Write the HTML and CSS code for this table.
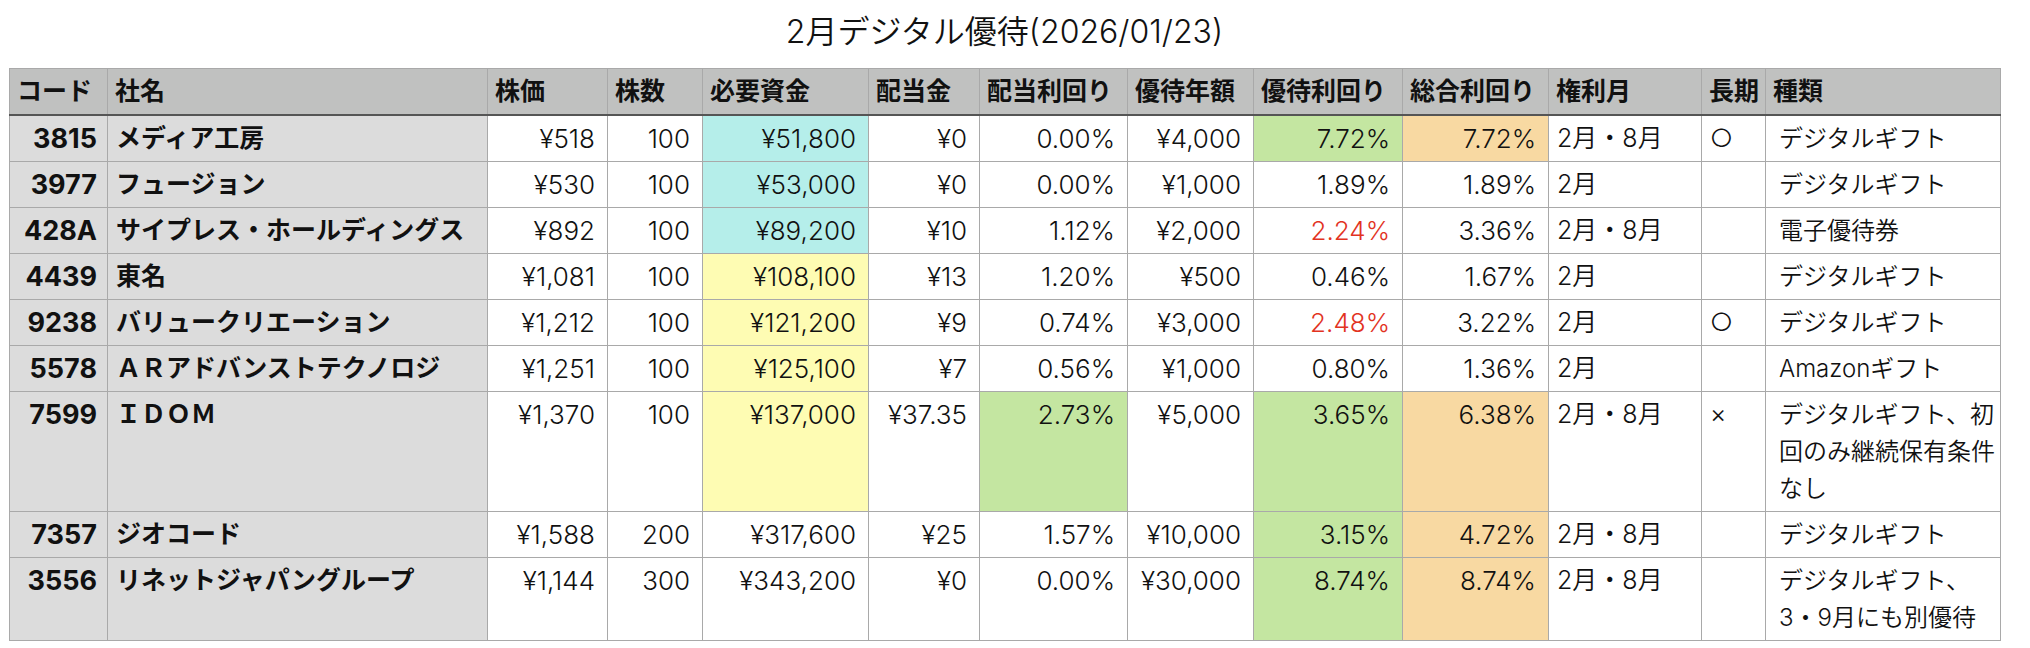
FILE: index.html
```html
<!DOCTYPE html>
<html lang="ja">
<head>
<meta charset="utf-8">
<title>2月デジタル優待</title>
<link rel="stylesheet" href="styles.css">
</head>
<body>
<div class="page">
  <h1 class="title">2月デジタル優待(2026/01/23)</h1>
  <table class="sheet">
    <colgroup>
      <col class="w-code"><col class="w-name"><col class="w-price"><col class="w-qty"><col class="w-need">
      <col class="w-div"><col class="w-dy"><col class="w-ya"><col class="w-yy"><col class="w-ty">
      <col class="w-month"><col class="w-long"><col class="w-kind">
    </colgroup>
    <thead>
      <tr>
        <th>コード</th><th>社名</th><th>株価</th><th>株数</th><th>必要資金</th>
        <th>配当金</th><th>配当利回り</th><th>優待年額</th><th>優待利回り</th><th>総合利回り</th>
        <th>権利月</th><th>長期</th><th>種類</th>
      </tr>
    </thead>
    <tbody>
      <tr>
        <td class="code">3815</td><td class="name">メディア工房</td>
        <td class="num">¥518</td><td class="num">100</td><td class="num cyan">¥51,800</td>
        <td class="num">¥0</td><td class="num">0.00%</td><td class="num">¥4,000</td>
        <td class="num green">7.72%</td><td class="num orange">7.72%</td>
        <td>2月・8月</td><td>○</td><td class="kind">デジタルギフト</td>
      </tr>
      <tr>
        <td class="code">3977</td><td class="name">フュージョン</td>
        <td class="num">¥530</td><td class="num">100</td><td class="num cyan">¥53,000</td>
        <td class="num">¥0</td><td class="num">0.00%</td><td class="num">¥1,000</td>
        <td class="num">1.89%</td><td class="num">1.89%</td>
        <td>2月</td><td></td><td class="kind">デジタルギフト</td>
      </tr>
      <tr>
        <td class="code">428A</td><td class="name">サイプレス・ホールディングス</td>
        <td class="num">¥892</td><td class="num">100</td><td class="num cyan">¥89,200</td>
        <td class="num">¥10</td><td class="num">1.12%</td><td class="num">¥2,000</td>
        <td class="num red">2.24%</td><td class="num">3.36%</td>
        <td>2月・8月</td><td></td><td class="kind">電子優待券</td>
      </tr>
      <tr>
        <td class="code">4439</td><td class="name">東名</td>
        <td class="num">¥1,081</td><td class="num">100</td><td class="num yellow">¥108,100</td>
        <td class="num">¥13</td><td class="num">1.20%</td><td class="num">¥500</td>
        <td class="num">0.46%</td><td class="num">1.67%</td>
        <td>2月</td><td></td><td class="kind">デジタルギフト</td>
      </tr>
      <tr>
        <td class="code">9238</td><td class="name">バリュークリエーション</td>
        <td class="num">¥1,212</td><td class="num">100</td><td class="num yellow">¥121,200</td>
        <td class="num">¥9</td><td class="num">0.74%</td><td class="num">¥3,000</td>
        <td class="num red">2.48%</td><td class="num">3.22%</td>
        <td>2月</td><td>○</td><td class="kind">デジタルギフト</td>
      </tr>
      <tr>
        <td class="code">5578</td><td class="name">ＡＲアドバンストテクノロジ</td>
        <td class="num">¥1,251</td><td class="num">100</td><td class="num yellow">¥125,100</td>
        <td class="num">¥7</td><td class="num">0.56%</td><td class="num">¥1,000</td>
        <td class="num">0.80%</td><td class="num">1.36%</td>
        <td>2月</td><td></td><td class="kind">Amazonギフト</td>
      </tr>
      <tr>
        <td class="code">7599</td><td class="name">ＩＤＯＭ</td>
        <td class="num">¥1,370</td><td class="num">100</td><td class="num yellow">¥137,000</td>
        <td class="num">¥37.35</td><td class="num green">2.73%</td><td class="num">¥5,000</td>
        <td class="num green">3.65%</td><td class="num orange">6.38%</td>
        <td>2月・8月</td><td>×</td><td class="kind">デジタルギフト、初<br>回のみ継続保有条件<br>なし</td>
      </tr>
      <tr>
        <td class="code">7357</td><td class="name">ジオコード</td>
        <td class="num">¥1,588</td><td class="num">200</td><td class="num">¥317,600</td>
        <td class="num">¥25</td><td class="num">1.57%</td><td class="num">¥10,000</td>
        <td class="num green">3.15%</td><td class="num orange">4.72%</td>
        <td>2月・8月</td><td></td><td class="kind">デジタルギフト</td>
      </tr>
      <tr>
        <td class="code">3556</td><td class="name">リネットジャパングループ</td>
        <td class="num">¥1,144</td><td class="num">300</td><td class="num">¥343,200</td>
        <td class="num">¥0</td><td class="num">0.00%</td><td class="num">¥30,000</td>
        <td class="num green">8.74%</td><td class="num orange">8.74%</td>
        <td>2月・8月</td><td></td><td class="kind">デジタルギフト、<br>3・9月にも別優待</td>
      </tr>
    </tbody>
  </table>
</div>
</body>
</html>
```
FILE: styles.css
```css
body {
  margin: 0;
  background: #ffffff;
  color: #111111;
  font-family: "Inter", "Noto Sans CJK JP", sans-serif;
}

.page {
  padding: 0 0 0 9px;
}

.title {
  margin: 0;
  width: 1991px;
  padding-top: 12px;
  height: 56px;
  line-height: 40px;
  font-size: 32px;
  font-weight: 350;
  text-align: center;
}

.sheet {
  border-collapse: collapse;
  table-layout: fixed;
  width: 1991px;
}

.w-code { width: 98px; }
.w-name { width: 380px; }
.w-price { width: 120px; }
.w-qty { width: 95px; }
.w-need { width: 166px; }
.w-div { width: 111px; }
.w-dy { width: 148px; }
.w-ya { width: 126px; }
.w-yy { width: 149px; }
.w-ty { width: 146px; }
.w-month { width: 153px; }
.w-long { width: 64px; }
.w-kind { width: 235px; }

.sheet th,
.sheet td {
  border: 1px solid #a9a9a9;
  padding: 4px 8px 4px 8px;
  font-size: 25px;
  font-weight: 350;
  line-height: 37px;
  vertical-align: top;
  white-space: nowrap;
  overflow: hidden;
}

.sheet th {
  background: #c0c1c0;
  font-weight: 700;
  text-align: left;
  padding-left: 7px;
  border-bottom: 2px solid #555555;
}

.sheet .code {
  background: #dcdcdc;
  font-weight: 700;
  font-size: 27px;
  padding-left: 2px;
  padding-right: 10px;
  text-align: right;
}

.sheet .name {
  background: #dcdcdc;
  font-weight: 700;
}

.sheet .num {
  padding-left: 2px;
  padding-right: 12px;
  font-size: 26px;
  text-align: right;
}

.sheet .kind {
  font-size: 24px;
  padding-left: 13px;
  padding-right: 2px;
}

.sheet .cyan { background: #b5eeea; }
.sheet .yellow { background: #fefcb3; }
.sheet .green { background: #c4e6a1; }
.sheet .orange { background: #f8d9a2; }
.sheet .red { color: #e2331f; }
```
